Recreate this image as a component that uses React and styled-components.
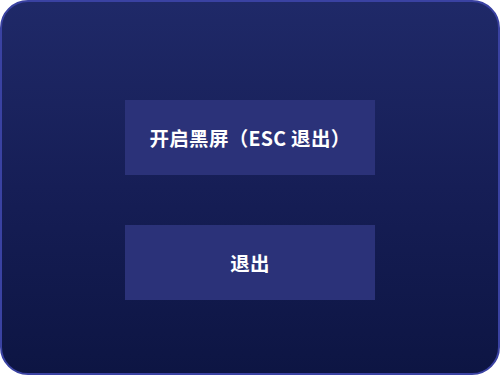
import React from "react";
import styled, { createGlobalStyle } from "styled-components";

const Global = createGlobalStyle`
  html, body { margin: 0; padding: 0; background: #ffffff; }
  body { font-family: "Noto Sans CJK SC", "Noto Sans", sans-serif; }
`;

const Window = styled.div`
  box-sizing: border-box;
  width: 500px;
  height: 375px;
  border-radius: 28px;
  border: 2px solid #3a42a2;
  background: linear-gradient(180deg, #1f2968 0%, #161e56 50%, #0d1543 100%);
  display: flex;
  flex-direction: column;
  align-items: center;
  padding-top: 98px;
  gap: 50px;
  overflow: hidden;
`;

const MenuButton = styled.button`
  box-sizing: border-box;
  width: 250px;
  height: 75px;
  border: none;
  background: #2b3279;
  color: #ffffff;
  font-family: "Noto Sans CJK SC", "Noto Sans", sans-serif;
  font-weight: 700;
  font-size: 19.5px;
  letter-spacing: 0.3px;
  display: flex;
  align-items: center;
  justify-content: center;
  cursor: pointer;
  padding: 0 0 0 0;
`;

export default function App() {
  return (
    <>
      <Global />
      <Window>
        <MenuButton>开启黑屏（ESC 退出）</MenuButton>
        <MenuButton>退出</MenuButton>
      </Window>
    </>
  );
}
